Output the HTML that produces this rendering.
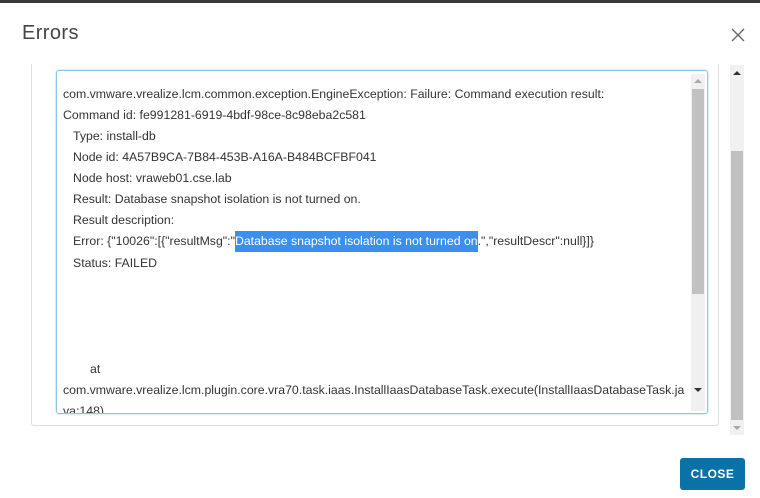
<!DOCTYPE html>
<html><head><style>
body{margin:0;width:760px;height:498px;background:#fff;position:relative;overflow:hidden;font-family:"Liberation Sans",sans-serif;}
.top{position:absolute;left:0;top:0;width:760px;height:3px;background:#3a3a3a;}
.title{position:absolute;left:22px;top:22px;font-size:20px;color:#444;font-weight:normal;letter-spacing:0.4px}
.x{position:absolute;left:731px;top:28px;}
.card{position:absolute;left:31px;top:64px;width:686px;height:361px;border:1px solid #ddd;border-top:none;border-radius:0 0 3px 3px;}
.ta{position:absolute;left:56px;top:70px;width:650px;height:342px;border:1px solid #8cc8e4;border-radius:3px;box-shadow:0 0 2px #9cd3ee;overflow:hidden;}
.l{position:absolute;font-size:12.3px;color:#333;white-space:nowrap;}
.hl{background:#3a8ff0;color:#fff;padding:3px 0 4px;}
.isb{position:absolute;left:634px;top:3px;width:14px;height:337px;background:#f0f0f0;}
.isb .th{position:absolute;left:1px;top:15px;width:12px;height:205px;background:#c1c1c1;}
.osb{position:absolute;left:730px;top:65px;width:14px;height:370px;background:#f1f1f1;}
.osb .th{position:absolute;left:1px;top:86px;width:12px;height:269px;background:#c1c1c1;}
.btn{position:absolute;left:680px;top:458px;width:65px;height:32px;background:#0a72a6;border-radius:3px;color:#fff;font-size:12px;font-weight:bold;text-align:center;line-height:32px;letter-spacing:0.5px}
</style></head><body>
<div class="top"></div>
<div class="title">Errors</div>
<svg class="x" width="14" height="14" viewBox="0 0 14 14"><path d="M1 1L13 13M13 1L1 13" stroke="#666" stroke-width="1.3"/></svg>
<div class="card"></div>
<div class="ta">
<div class="l" style="left:6px;top:16px">com.vmware.vrealize.lcm.common.exception.EngineException: Failure: Command execution result:</div>
<div class="l" style="left:6px;top:37px">Command id: fe991281-6919-4bdf-98ce-8c98eba2c581</div>
<div class="l" style="left:16px;top:58px">Type: install-db</div>
<div class="l" style="left:16px;top:79px">Node id: 4A57B9CA-7B84-453B-A16A-B484BCFBF041</div>
<div class="l" style="left:16px;top:100px">Node host: vraweb01.cse.lab</div>
<div class="l" style="left:16px;top:121px">Result: Database snapshot isolation is not turned on.</div>
<div class="l" style="left:16px;top:142px">Result description:</div>
<div class="l" style="left:16px;top:163px">Error: {"10026":[{"resultMsg":"<span class="hl">Database snapshot isolation is not turned on</span>.","resultDescr":null}]}</div>
<div class="l" style="left:16px;top:185px">Status: FAILED</div>
<div class="l" style="left:33px;top:291px">at</div>
<div class="l" style="left:6px;top:312px">com.vmware.vrealize.lcm.plugin.core.vra70.task.iaas.InstallIaasDatabaseTask.execute(InstallIaasDatabaseTask.ja</div>
<div class="l" style="left:6px;top:333px">va:148)</div>
<div class="isb"><div class="th"></div>
<svg style="position:absolute;left:3px;top:4px" width="8" height="6"><path d="M0 5L4 1L8 5Z" fill="#aaa"/></svg>
<svg style="position:absolute;left:3px;top:313px" width="8" height="6"><path d="M0 1L4 5L8 1Z" fill="#333"/></svg>
</div>
</div>
<div class="osb"><div class="th"></div>
<svg style="position:absolute;left:3px;top:5px" width="8" height="6"><path d="M0 5L4 1L8 5Z" fill="#333"/></svg>
<svg style="position:absolute;left:3px;top:360px" width="8" height="6"><path d="M0 1L4 5L8 1Z" fill="#aaa"/></svg>
</div>
<div class="btn">CLOSE</div>
</body></html>
